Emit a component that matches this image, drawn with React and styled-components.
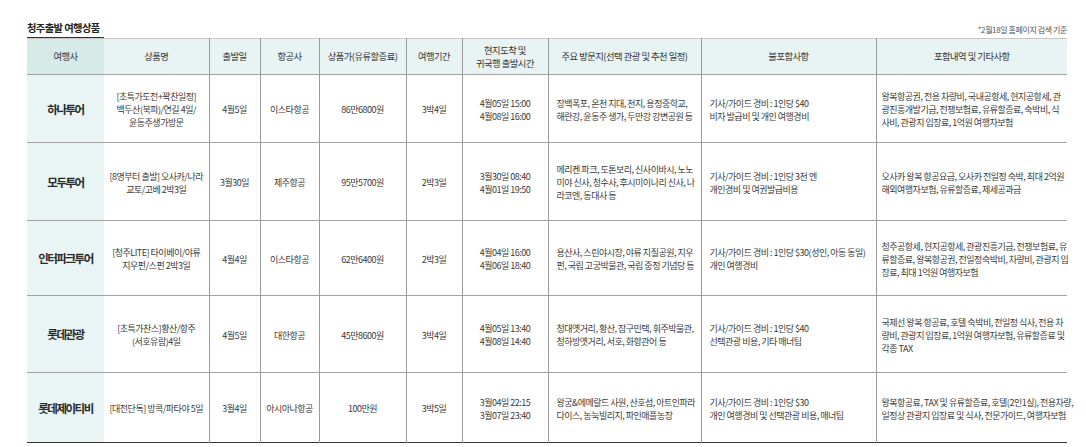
import React from "react";
import styled, { createGlobalStyle } from "styled-components";

const GlobalStyle = createGlobalStyle`
  body {
    margin: 0;
    background: #fff;
    font-family: "Noto Sans CJK KR", "Noto Sans", sans-serif;
    color: #333;
  }
`;

const Page = styled.div`
  width: 1040px;
  padding: 21px 19px 0 27px;
`;

const TopBar = styled.div`
  display: flex;
  justify-content: space-between;
  align-items: flex-end;
`;

const Title = styled.h2`
  margin: 0;
  width: 77px;
  box-sizing: border-box;
  font-size: 10.3px;
  font-weight: 700;
  letter-spacing: -0.6px;
  line-height: 14px;
  color: #222;
  white-space: nowrap;
  padding-bottom: 2px;
  border-bottom: 1px solid #333;
`;

const Note = styled.span`
  font-size: 8px;
  letter-spacing: -0.4px;
  line-height: 10px;
  color: #555;
  margin-bottom: 3px;
`;

const Table = styled.table`
  width: 1040px;
  table-layout: fixed;
  border-collapse: collapse;
  border-top: 1px solid #c6c6c6;
  border-bottom: 1px solid #333;
`;

const HeadCell = styled.th`
  height: 35px;
  padding: 0;
  font-size: 9.3px;
  font-weight: 400;
  letter-spacing: -0.5px;
  line-height: 13px;
  color: #333;
  text-align: center;
  background: ${(p) => (p.$first ? "#d6ebe8" : "#e7f4f3")};
  border-left: ${(p) => (p.$divider ? "1px solid #9a9a9a" : "none")};
`;

const Row = styled.tr`
  height: ${(p) => p.$h}px;
`;

const CompanyCell = styled.td`
  padding: 0;
  text-align: center;
  background: #e9f5f4;
  border-top: 1px solid #a3a3a3;
  font-size: 11.5px;
  font-weight: 700;
  letter-spacing: -1.5px;
  color: #2a2a2a;
  white-space: nowrap;
`;

const Cell = styled.td`
  padding: 2px ${(p) => p.$pad || 0}px 0;
  text-align: ${(p) => p.$align || "center"};
  vertical-align: middle;
  border-top: 1px solid #a3a3a3;
  border-left: ${(p) => (p.$divider ? "1px solid #9a9a9a" : "none")};
  font-size: 9px;
  letter-spacing: -0.5px;
  line-height: 13px;
  color: #3a3a3a;
  white-space: nowrap;
`;

const Line = styled.div``;

const widths = [77, 105, 51, 59, 87, 56, 86, 153, 175, 191];

const heads = [
  "여행사",
  "상품명",
  "출발일",
  "항공사",
  "상품가(유류할증료)",
  "여행기간",
  ["현지도착 및", "귀국행 출발시간"],
  "주요 방문지(선택 관광 및 추천 일정)",
  "불포함사항",
  "포함내역 및 기타사항",
];

const rows = [
  {
    h: 68,
    company: "하나투어",
    product: ["[초특가도전+꽉찬일정]", "백두산(북파)/연길 4일/", "윤동주생가방문"],
    date: "4월5일",
    airline: "이스타항공",
    price: "86만6800원",
    period: "3박4일",
    times: ["4월05일 15:00", "4월08일 16:00"],
    places: ["장백폭포, 온천 지대, 천지, 용정중학교,", "해란강, 윤동주 생가, 두만강 강변공원 등"],
    excl: ["기사/가이드 경비 : 1인당 $40", "비자 발급비 및 개인 여행경비"],
    incl: [
      "왕복항공권, 전용 차량비, 국내공항세, 현지공항세, 관",
      "광진흥개발기금, 전쟁보험료, 유류할증료, 숙박비, 식",
      "사비, 관광지 입장료, 1억원 여행자보험",
    ],
  },
  {
    h: 78,
    company: "모두투어",
    product: ["[8명부터 출발] 오사카/나라", "교토/고베 2박3일"],
    date: "3월30일",
    airline: "제주항공",
    price: "95만5700원",
    period: "2박3일",
    times: ["3월30일 08:40", "4월01일 19:50"],
    places: ["메리켄 파크, 도톤보리, 신사이바시, 노노", "미야 신사, 청수사, 후시미이나리 신사, 나", "라코엔, 동대사 등"],
    excl: ["기사/가이드 경비 : 1인당 3천 엔", "개인경비 및 여권발급비용"],
    incl: ["오사카 왕복 항공요금, 오사카 전일정 숙박, 최대 2억원", "해외여행자보험, 유류할증료, 제세공과금"],
  },
  {
    h: 75,
    company: "인터파크투어",
    product: ["[청주LITE] 타이베이/야류", "지우펀/스펀 2박3일"],
    date: "4월4일",
    airline: "이스타항공",
    price: "62만6400원",
    period: "2박3일",
    times: ["4월04일 16:00", "4월06일 18:40"],
    places: ["용산사, 스린야시장, 야류 지질공원, 지우", "펀, 국립 고궁박물관, 국립 중정 기념당 등"],
    excl: ["기사/가이드 경비 : 1인당 $30(성인, 아동 동일)", "개인 여행경비"],
    incl: [
      "청주공항세, 현지공항세, 관광진흥기금, 전쟁보험료, 유",
      "류할증료, 왕복항공권, 전일정숙박비, 차량비, 관광지 입",
      "장료, 최대 1억원 여행자보험",
    ],
  },
  {
    h: 77,
    company: "롯데관광",
    product: ["[초특가찬스]황산/항주", "(서호유람)4일"],
    date: "4월5일",
    airline: "대한항공",
    price: "45만8600원",
    period: "3박4일",
    times: ["4월05일 13:40", "4월08일 14:40"],
    places: ["청대옛거리, 황산, 잠구민택, 휘주박물관,", "청하방옛거리, 서호, 화항관어 등"],
    excl: ["기사/가이드 경비 : 1인당 $40", "선택관광 비용, 기타 매너팁"],
    incl: [
      "국제선 왕복 항공료, 호텔 숙박비, 전일정 식사, 전용 차",
      "량비, 관광지 입장료, 1억원 여행자보험, 유류할증료 및",
      "각종 TAX",
    ],
  },
  {
    h: 70,
    company: "롯데제이티비",
    product: ["[대전단독] 방콕/파타야 5일"],
    date: "3월4일",
    airline: "아시아나항공",
    price: "100만원",
    period: "3박5일",
    times: ["3월04일 22:15", "3월07일 23:40"],
    places: ["왕궁&에메랄드 사원, 산호섬, 아트인파라", "다이스, 농눅빌리지, 파인애플농장"],
    excl: ["기사/가이드 경비 : 1인당 $30", "개인 여행경비 및 선택관광 비용, 매너팁"],
    incl: ["왕복항공료, TAX 및 유류할증료, 호텔(2인1실), 전용차량,", "일정상 관광지 입장료 및 식사, 전문가이드, 여행자보험"],
  },
];

const Lines = ({ items }) =>
  items.map((t, i) => <Line key={i}>{t}</Line>);

export default function App() {
  return (
    <Page>
      <GlobalStyle />
      <TopBar>
        <Title>청주출발 여행상품</Title>
        <Note>*2월18일 홈페이지 검색 기준</Note>
      </TopBar>
      <Table>
        <colgroup>
          {widths.map((w, i) => (
            <col key={i} style={{ width: w }} />
          ))}
        </colgroup>
        <thead>
          <tr>
            {heads.map((h, i) => (
              <HeadCell key={i} $first={i === 0} $divider={i > 1}>
                {Array.isArray(h) ? <Lines items={h} /> : h}
              </HeadCell>
            ))}
          </tr>
        </thead>
        <tbody>
          {rows.map((r) => (
            <Row key={r.company} $h={r.h}>
              <CompanyCell>{r.company}</CompanyCell>
              <Cell>
                <Lines items={r.product} />
              </Cell>
              <Cell $divider>{r.date}</Cell>
              <Cell $divider>{r.airline}</Cell>
              <Cell $divider>{r.price}</Cell>
              <Cell $divider>{r.period}</Cell>
              <Cell $divider>
                <Lines items={r.times} />
              </Cell>
              <Cell $divider $align="left" $pad={8}>
                <Lines items={r.places} />
              </Cell>
              <Cell $divider $align="left" $pad={8}>
                <Lines items={r.excl} />
              </Cell>
              <Cell $divider $align="left" $pad={5}>
                <Lines items={r.incl} />
              </Cell>
            </Row>
          ))}
        </tbody>
      </Table>
    </Page>
  );
}
